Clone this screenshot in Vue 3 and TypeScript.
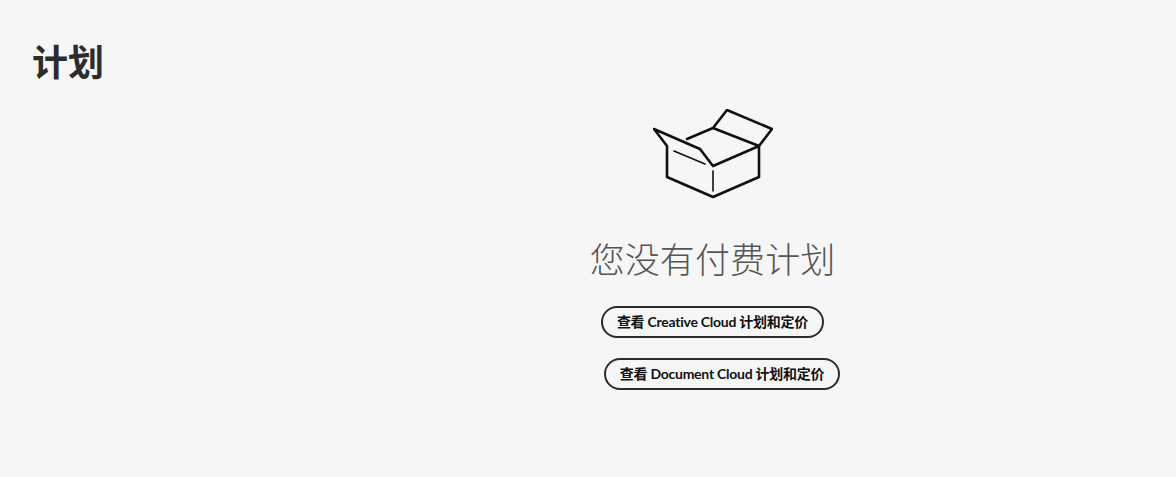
<template>
  <div class="plans-page">
    <h1 class="page-title">计划</h1>
    <div class="empty-state">
      <svg class="box-icon" width="120" height="90" viewBox="0 0 120 90" fill="none" stroke="#111" stroke-width="2.6" stroke-linecap="round" stroke-linejoin="round">
        <path d="M14 37 1 20 47 40 60 57 106 37V68L60 88 14 68Z" />
        <path d="M34 30 60 19 106 37 119 20 74 1 60 19" />
        <path d="M21 42 52 55" stroke-width="1.6" />
        <path d="M60 62V82" stroke-width="1.6" />
      </svg>
      <h2 class="empty-title">您没有付费计划</h2>
      <a v-for="link in links" :key="link.label" class="plan-link" :class="link.cls" href="#">{{ link.label }}</a>
    </div>
  </div>
</template>

<script setup lang="ts">
const links = [
  { label: '查看 Creative Cloud 计划和定价', cls: 'first' },
  { label: '查看 Document Cloud 计划和定价', cls: 'second' }
]
</script>

<style scoped>
.plans-page {
  height: 477px;
  background: #f6f6f7;
  box-sizing: border-box;
  padding: 38px 32px 0;
  font-family: "Lato", "Noto Sans CJK SC", sans-serif;
  overflow: hidden;
}

.page-title {
  margin: 0;
  font-size: 36px;
  line-height: 48px;
  font-weight: 700;
  color: #2c2c2c;
}

.empty-state {
  display: flex;
  flex-direction: column;
  align-items: center;
  margin-top: 23px;
  margin-left: 249px;
}

.box-icon {
  display: block;
}

.empty-title {
  margin: 35px 0 0;
  font-size: 35px;
  line-height: 50px;
  font-weight: 300;
  color: #555;
  letter-spacing: 0.1px;
}

.plan-link {
  box-sizing: border-box;
  height: 32px;
  padding: 0 14px 3px;
  display: flex;
  align-items: center;
  border: 2px solid #2c2c2c;
  border-radius: 16px;
  font-size: 14px;
  font-weight: 700;
  letter-spacing: -0.25px;
  color: #111;
  text-decoration: none;
  white-space: nowrap;
}

.first {
  margin-top: 22px;
}

.second {
  margin-top: 20px;
  margin-left: 19px;
}
</style>

<style>
body {
  background: #f6f6f7;
}
</style>
